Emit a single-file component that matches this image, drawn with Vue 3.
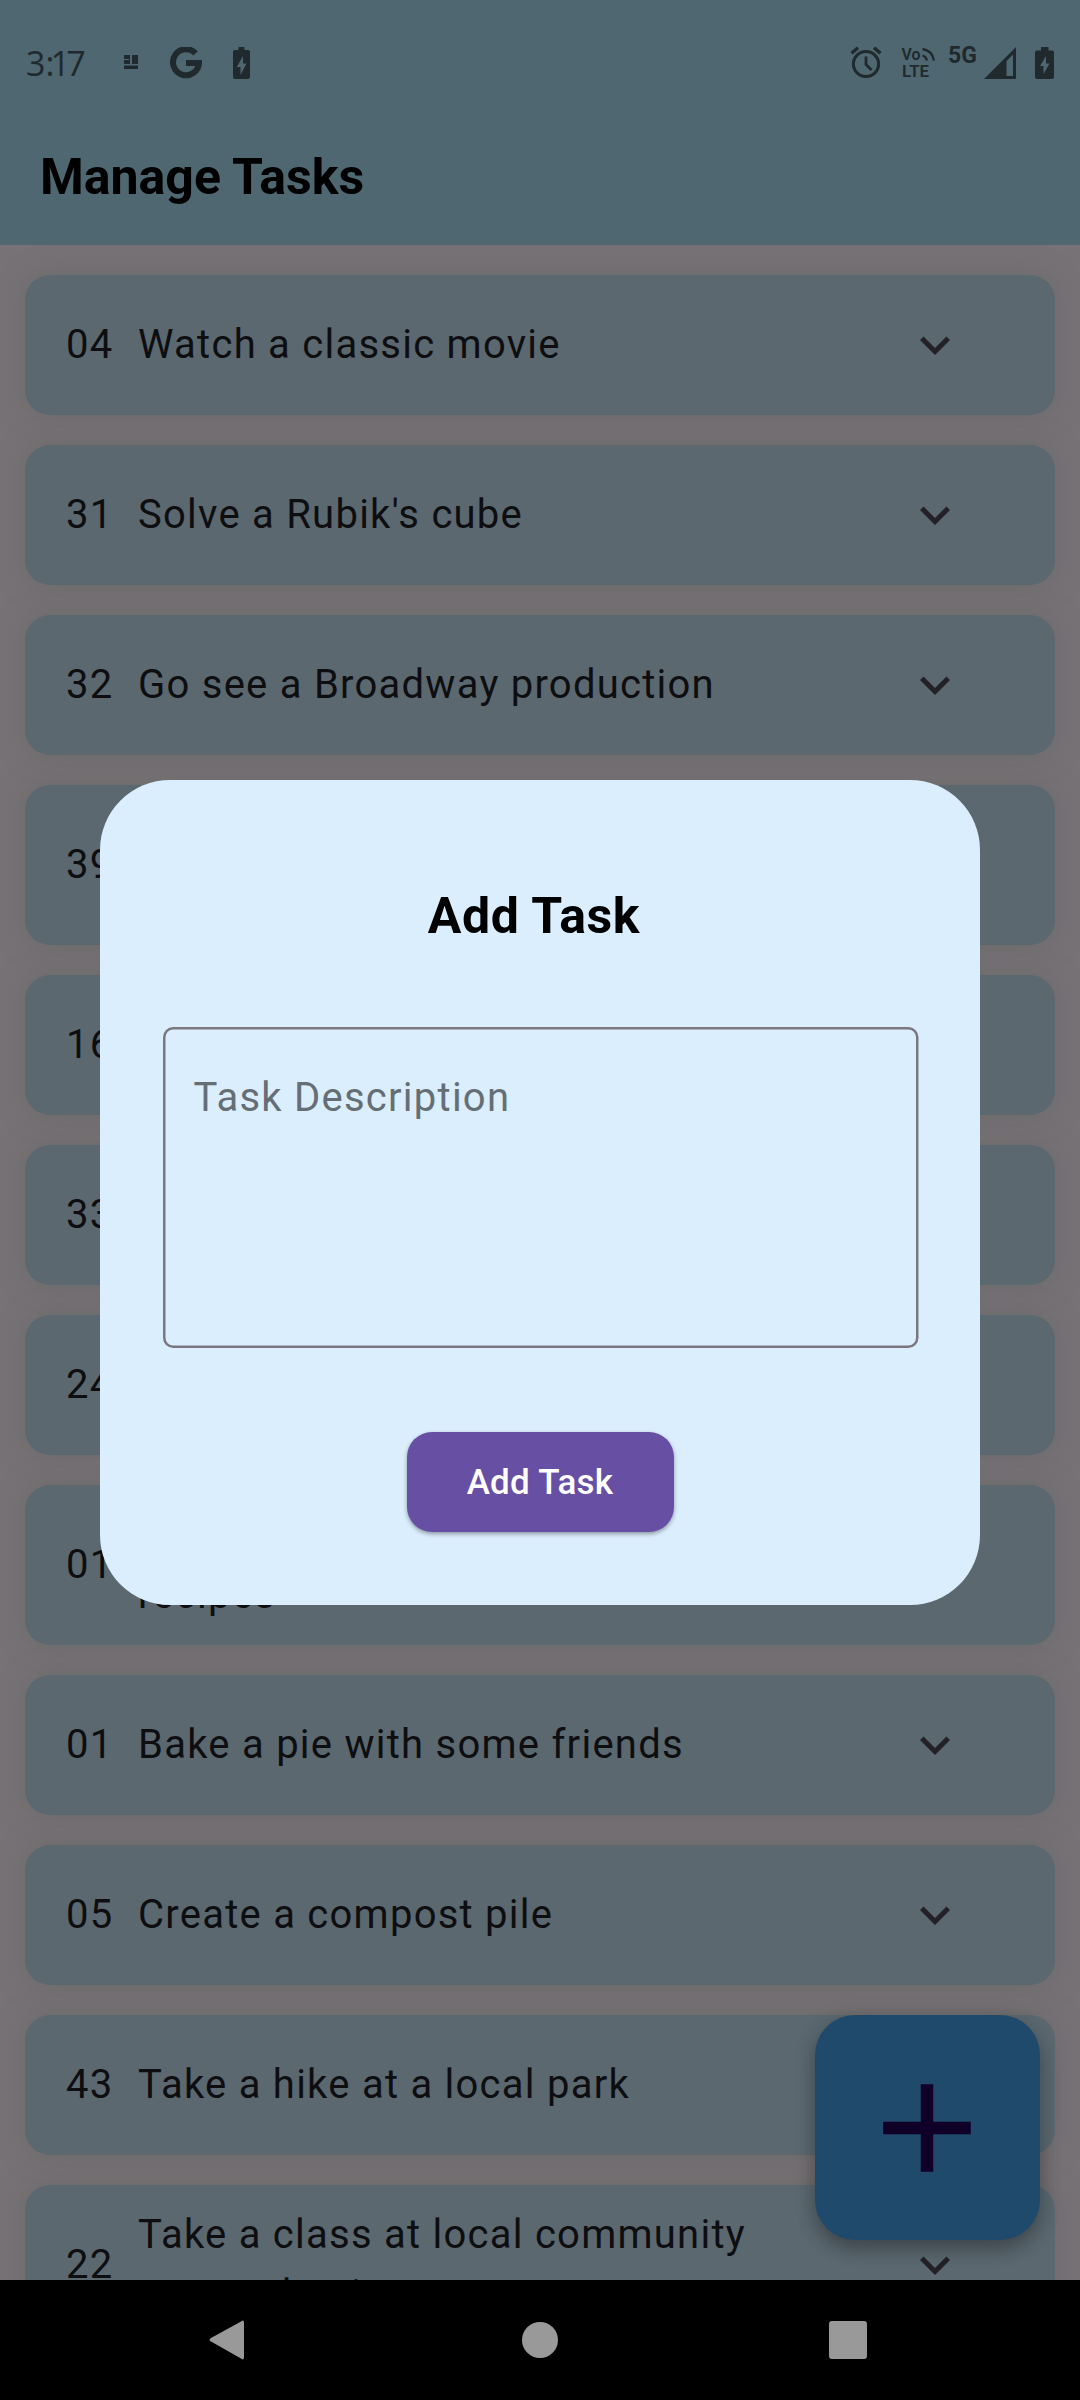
<script setup>
const tasks = [
  { num: '04', lines: ['Watch a classic movie'] },
  { num: '31', lines: ["Solve a Rubik's cube"] },
  { num: '32', lines: ['Go see a Broadway production'] },
  { num: '39', lines: ['', ''] },
  { num: '16', lines: [''] },
  { num: '33', lines: [''] },
  { num: '24', lines: [''] },
  { num: '01', lines: ['', 'recipes'] },
  { num: '01', lines: ['Bake a pie with some friends'] },
  { num: '05', lines: ['Create a compost pile'] },
  { num: '43', lines: ['Take a hike at a local park'] },
  { num: '22', lines: ['Take a class at local community', 'or area business'] },
]
</script>

<template>
  <div class="screen">
    <header class="top">
      <div class="status">
        <span class="clock"><span>3</span><span>:</span><span class="one">1</span><span class="seven">7</span></span>
        <svg class="grid" width="14" height="14" viewBox="0 0 14 14">
          <path d="M0 0h6v4H0zM8 0h6v9H8zM0 5h6V9H0zM0 10.500h14V14H0zM5 1.500h1V9H5z" />
        </svg>
        <svg class="google" width="32" height="32" viewBox="0 0 32 32">
          <path d="M25.600 6.400A13 13 0 1 0 29 16H16" fill="none" stroke="#20292d" stroke-width="6" />
        </svg>
        <svg class="bat1" width="17" height="32" viewBox="0 0 17 32">
          <path fill-rule="evenodd" d="M5.500 0h6v3H15q2 0 2 2v25q0 2-2 2H2q-2 0-2-2V5q0-2 2-2h3.500zM10 9L3.800 20H7.500v8L13.500 16.500H10z" />
        </svg>
        <span class="spacer"></span>
        <svg class="alarm" width="32" height="33" viewBox="0 0 32 33">
          <g fill="none" stroke="#20292d">
            <circle cx="16" cy="18" r="12.600" stroke-width="3" />
            <path d="M16 10.500V18.500L21.500 24" stroke-width="2.800" />
            <path d="M1.500 7.200L8 1.800M24 1.800L30.500 7.200" stroke-width="3.400" />
          </g>
        </svg>
        <svg class="volte" width="36" height="36" viewBox="0 0 36 36">
          <text x="0.500" y="15" font-size="16" textLength="19" lengthAdjust="spacingAndGlyphs">Vo</text>
          <text x="1" y="32" font-size="17" textLength="27" lengthAdjust="spacingAndGlyphs">LTE</text>
          <path d="M21.500 10.500Q25 11.500 26 15.500M21.500 4Q31 5.500 33 15.500" fill="none" stroke="#20292d" stroke-width="2.300" />
        </svg>
        <span class="fiveg">5G</span>
        <svg class="signal" width="32" height="32" viewBox="0 0 32 32">
          <path fill-rule="evenodd" d="M32 0V32H0zM29 7.500L22.500 14V29H29z" />
        </svg>
        <svg class="bat2" width="19" height="32" viewBox="0 0 19 32">
          <path fill-rule="evenodd" d="M6 0h7.500v3.500H17q2 0 2 2V30q0 2-2 2H2q-2 0-2-2V5.500q0-2 2-2h4zM11 9L5 19H8.500v8L14.500 16.500H11z" />
        </svg>
      </div>
      <h1>Manage Tasks</h1>
    </header>

    <main class="list">
      <div v-for="(t, i) in tasks" :key="i" class="card" :class="{ tall: t.lines.length > 1 }">
        <span class="num">{{ t.num }}</span>
        <div class="text">
          <div v-for="(l, j) in t.lines" :key="j" class="line">{{ l }}</div>
        </div>
        <svg class="chev" width="60" height="60" viewBox="0 0 24 24">
          <path d="M16.590 8.590L12 13.170 7.410 8.590 6 10l6 6 6-6z" />
        </svg>
      </div>
    </main>

    <nav class="nav">
      <svg class="back" width="36" height="42" viewBox="0 0 36 42">
        <path d="M32 2.500Q35 0 35 4V38Q35 42 32 39.500L2 22.500Q-1 21 2 19z" />
      </svg>
      <span class="home"></span>
      <span class="recent"></span>
    </nav>

    <button class="fab">
      <svg width="150" height="150" viewBox="0 0 24 24"><path d="M19 13h-6v6h-2v-6H5v-2h6V5h2v6h6v2z" /></svg>
    </button>

    <section class="dialog">
      <h2>Add Task</h2>
      <div class="field">
        <svg class="outline" width="756" height="322" viewBox="0 0 756 322">
          <rect x="1.250" y="1.250" width="753" height="318.500" rx="9" />
        </svg>
        Task Description
      </div>
      <button class="submit">Add Task</button>
    </section>
  </div>
</template>

<style>
body {
  margin: 0;
  background: #000;
}
</style>

<style scoped>
.screen {
  position: relative;
  width: 1080px;
  height: 2400px;
  overflow: hidden;
  display: flex;
  flex-direction: column;
  background: #777275;
  font-family: Roboto, "Liberation Sans", sans-serif;
}
.top {
  height: 245px;
  flex: none;
  background: #4f6770;
  position: relative;
}
.status {
  height: 124px;
  display: flex;
  align-items: center;
  padding: 0 26px;
  box-sizing: border-box;
  fill: #20292d;
  color: #20292d;
}
.status svg {
  flex: none;
}
.clock {
  width: 98px;
  display: flex;
  font: 400 34px/40px "Open Sans", sans-serif;
  padding-top: 2px;
  box-sizing: border-box;
}
.one {
  margin-left: -4px;
}
.seven {
  margin-left: -3.5px;
}
.google {
  margin-left: 32px;
}
.bat1 {
  margin-left: 31px;
}
.google,
.bat1 {
  margin-top: 1px;
}
.spacer {
  flex: 1;
}
.alarm {
  margin-right: 19px;
  margin-top: 1px;
}
.volte {
  font-family: Roboto, sans-serif;
  font-weight: 600;
  margin-top: 1px;
}
.fiveg {
  font-size: 23px;
  font-weight: 700;
  line-height: 24px;
  margin: 0 8px 12px 11px;
  width: 28px;
}
.bat2 {
  margin-left: 19px;
}
.signal,
.bat2 {
  margin-top: 1px;
}
h1 {
  margin: 0;
  padding: 23px 0 0 40px;
  font-size: 50px;
  line-height: 60px;
  font-weight: 700;
  color: #000;
}
.list {
  flex: 1;
  min-height: 0;
  overflow: hidden;
  display: flex;
  flex-direction: column;
  gap: 30px;
  padding: 30px 25px 0;
}
.card {
  flex: none;
  height: 140px;
  box-sizing: border-box;
  padding: 0 90px 0 41px;
  border-radius: 25px;
  background: #5b6870;
  box-shadow: 0 0 26px rgba(96, 99, 99, 0.5);
  display: flex;
  align-items: center;
  font-size: 40px;
  letter-spacing: 1.25px;
  color: #0e0e10;
}
.card.tall {
  height: 160px;
}
.num {
  width: 72px;
  line-height: 60px;
}
.text {
  flex: 1;
}
.line {
  height: 60px;
  line-height: 60px;
  white-space: nowrap;
}
.chev {
  fill: #232127;
}
.nav {
  flex: none;
  height: 120px;
  background: #000;
  position: relative;
  display: flex;
  align-items: center;
  justify-content: space-between;
  padding: 0 213px 0 209px;
  box-sizing: border-box;
  fill: #999;
}
.home {
  width: 36px;
  height: 36px;
  border-radius: 50%;
  background: #999;
  margin-left: 5px;
}
.recent {
  width: 38px;
  height: 38px;
  border-radius: 3px;
  background: #999;
}
.fab {
  position: absolute;
  right: 40px;
  bottom: 160px;
  width: 225px;
  height: 225px;
  border: 0;
  padding: 0 1px 0 0;
  border-radius: 40px;
  background: #1f4a6c;
  box-shadow: 0 10px 18px rgba(0, 0, 0, 0.26), 0 3px 25px rgba(0, 0, 0, 0.1);
  display: flex;
  align-items: center;
  justify-content: center;
  fill: #100028;
}
.dialog {
  position: absolute;
  left: 100px;
  top: 780px;
  width: 880px;
  height: 825px;
  border-radius: 70px;
  background: #dbeefe;
  display: flex;
  flex-direction: column;
  align-items: center;
}
h2 {
  margin: 106px 12px 0 0;
  font-size: 50px;
  line-height: 60px;
  font-weight: 700;
  letter-spacing: 0.6px;
  color: #000;
}
.field {
  position: relative;
  margin-top: 81px;
  width: 755px;
  height: 320px;
  box-sizing: border-box;
  padding: 41px 31px;
  font-size: 40px;
  line-height: 60px;
  letter-spacing: 1.25px;
  color: #656e75;
}
.outline {
  position: absolute;
  left: 0;
  top: 0;
  fill: none;
  stroke: #7b7680;
  stroke-width: 2.5px;
}
.submit {
  margin-top: 85px;
  width: 267px;
  height: 100px;
  border: 0;
  padding: 2px 0 0;
  border-radius: 25px;
  background: #6750a3;
  box-shadow: 0 2px 4px rgba(0, 0, 0, 0.36);
  font: 500 35px/50px Roboto, sans-serif;
  letter-spacing: 0.25px;
  color: #fff;
}
</style>
